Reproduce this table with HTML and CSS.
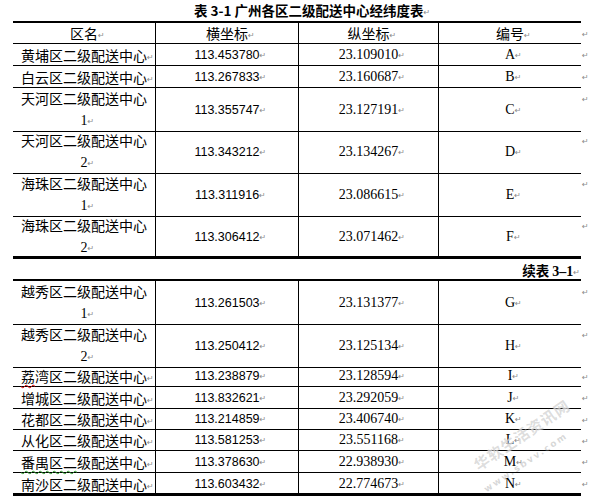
FILE: index.html
```html
<!DOCTYPE html>
<html lang="zh">
<head>
<meta charset="utf-8">
<title>表 3-1</title>
<link rel="stylesheet" href="styles.css">
</head>
<body>
<div class="page">
  <div class="title">表 3-1 广州各区二级配送中心经纬度表<i class="pm pm-t">↵</i></div>
  <div class="rule top"></div>

  <div class="row h21">
    <div class="c c1"><span>区名<i class="pm">↵</i></span></div>
    <div class="c c2"><span>横坐标<i class="pm">↵</i></span></div>
    <div class="c c3"><span>纵坐标<i class="pm">↵</i></span></div>
    <div class="c c4"><span>编号<i class="pm">↵</i></span></div>
    <div class="end"><i class="pm">↵</i></div>
  </div>
  <div class="row h22">
    <div class="c c1"><span>黄埔区二级配送中心<i class="pm">↵</i></span></div>
    <div class="c c2 num"><span>113.453780<i class="pm">↵</i></span></div>
    <div class="c c3 ser"><span>23.109010<i class="pm">↵</i></span></div>
    <div class="c c4 ser"><span>A<i class="pm">↵</i></span></div>
    <div class="end"><i class="pm">↵</i></div>
  </div>
  <div class="row h22">
    <div class="c c1"><span>白云区二级配送中心<i class="pm">↵</i></span></div>
    <div class="c c2 num"><span>113.267833<i class="pm">↵</i></span></div>
    <div class="c c3 ser"><span>23.160687<i class="pm">↵</i></span></div>
    <div class="c c4 ser"><span>B<i class="pm">↵</i></span></div>
    <div class="end"><i class="pm">↵</i></div>
  </div>
  <div class="row h42">
    <div class="c c1 two"><span>天河区二级配送中心<br><b class="sn">1</b><i class="pm">↵</i></span></div>
    <div class="c c2 num"><span>113.355747<i class="pm">↵</i></span></div>
    <div class="c c3 ser"><span>23.127191<i class="pm">↵</i></span></div>
    <div class="c c4 ser"><span>C<i class="pm">↵</i></span></div>
    <div class="end"><i class="pm">↵</i></div>
  </div>
  <div class="row h43">
    <div class="c c1 two"><span>天河区二级配送中心<br><b class="sn">2</b><i class="pm">↵</i></span></div>
    <div class="c c2 num"><span>113.343212<i class="pm">↵</i></span></div>
    <div class="c c3 ser"><span>23.134267<i class="pm">↵</i></span></div>
    <div class="c c4 ser"><span>D<i class="pm">↵</i></span></div>
    <div class="end"><i class="pm">↵</i></div>
  </div>
  <div class="row h42">
    <div class="c c1 two"><span>海珠区二级配送中心<br><b class="sn">1</b><i class="pm">↵</i></span></div>
    <div class="c c2 num"><span>113.311916<i class="pm">↵</i></span></div>
    <div class="c c3 ser"><span>23.086615<i class="pm">↵</i></span></div>
    <div class="c c4 ser"><span>E<i class="pm">↵</i></span></div>
    <div class="end"><i class="pm">↵</i></div>
  </div>
  <div class="row h41 last">
    <div class="c c1 two"><span>海珠区二级配送中心<br><b class="sn">2</b><i class="pm">↵</i></span></div>
    <div class="c c2 num"><span>113.306412<i class="pm">↵</i></span></div>
    <div class="c c3 ser"><span>23.071462<i class="pm">↵</i></span></div>
    <div class="c c4 ser"><span>F<i class="pm">↵</i></span></div>
    <div class="end"><i class="pm">↵</i></div>
  </div>
  <div class="rule bottom"></div>

  <div class="cont">续表 <b class="sb">3–1</b><i class="pm pm-t">↵</i></div>
  <div class="rule top"></div>

  <div class="row h43">
    <div class="c c1 two"><span>越秀区二级配送中心<br><b class="sn">1</b><i class="pm">↵</i></span></div>
    <div class="c c2 num"><span>113.261503<i class="pm">↵</i></span></div>
    <div class="c c3 ser"><span>23.131377<i class="pm">↵</i></span></div>
    <div class="c c4 ser"><span>G<i class="pm">↵</i></span></div>
    <div class="end"><i class="pm">↵</i></div>
  </div>
  <div class="row h42">
    <div class="c c1 two"><span>越秀区二级配送中心<br><b class="sn">2</b><i class="pm">↵</i></span></div>
    <div class="c c2 num"><span>113.250412<i class="pm">↵</i></span></div>
    <div class="c c3 ser"><span>23.125134<i class="pm">↵</i></span></div>
    <div class="c c4 ser"><span>H<i class="pm">↵</i></span></div>
    <div class="end"><i class="pm">↵</i></div>
  </div>
  <div class="row h21">
    <div class="c c1"><span><u class="sp">荔</u>湾区二级配送中心<i class="pm">↵</i></span></div>
    <div class="c c2 num"><span>113.238879<i class="pm">↵</i></span></div>
    <div class="c c3 ser"><span>23.128594<i class="pm">↵</i></span></div>
    <div class="c c4 ser"><span>I<i class="pm">↵</i></span></div>
    <div class="end"><i class="pm">↵</i></div>
  </div>
  <div class="row h22">
    <div class="c c1"><span>增城区二级配送中心<i class="pm">↵</i></span></div>
    <div class="c c2 num"><span>113.832621<i class="pm">↵</i></span></div>
    <div class="c c3 ser"><span>23.292059<i class="pm">↵</i></span></div>
    <div class="c c4 ser"><span>J<i class="pm">↵</i></span></div>
    <div class="end"><i class="pm">↵</i></div>
  </div>
  <div class="row h21">
    <div class="c c1"><span>花都区二级配送中心<i class="pm">↵</i></span></div>
    <div class="c c2 num"><span>113.214859<i class="pm">↵</i></span></div>
    <div class="c c3 ser"><span>23.406740<i class="pm">↵</i></span></div>
    <div class="c c4 ser"><span>K<i class="pm">↵</i></span></div>
    <div class="end"><i class="pm">↵</i></div>
  </div>
  <div class="row h21">
    <div class="c c1"><span>从化区二级配送中心<i class="pm">↵</i></span></div>
    <div class="c c2 num"><span>113.581253<i class="pm">↵</i></span></div>
    <div class="c c3 ser"><span>23.551168<i class="pm">↵</i></span></div>
    <div class="c c4 ser"><span>L<i class="pm">↵</i></span></div>
    <div class="end"><i class="pm">↵</i></div>
  </div>
  <div class="row h22">
    <div class="c c1"><span><u class="gr">番禺区二</u>级配送中心<i class="pm">↵</i></span></div>
    <div class="c c2 num"><span>113.378630<i class="pm">↵</i></span></div>
    <div class="c c3 ser"><span>22.938930<i class="pm">↵</i></span></div>
    <div class="c c4 ser"><span>M<i class="pm">↵</i></span></div>
    <div class="end"><i class="pm">↵</i></div>
  </div>
  <div class="row h20 last">
    <div class="c c1"><span>南沙区二级配送中心<i class="pm">↵</i></span></div>
    <div class="c c2 num"><span>113.603432<i class="pm">↵</i></span></div>
    <div class="c c3 ser"><span>22.774673<i class="pm">↵</i></span></div>
    <div class="c c4 ser"><span>N<i class="pm">↵</i></span></div>
    <div class="end"><i class="pm">↵</i></div>
  </div>
  <div class="rule bottom"></div>

  <div class="wm">
    <span class="wm-cn">华软生活资讯网</span>
    <span class="wm-url">www.sbvv.com</span>
  </div>
</div>
</body>
</html>
```

FILE: styles.css
```css
* {
  box-sizing: border-box;
  margin: 0;
  padding: 0;
}

html {
  background: #fff;
  overflow: hidden;
}

body {
  background: #fff;
  font-family: "Noto Sans CJK SC", "Noto Sans", sans-serif;
  font-size: 14px;
  color: #000;
}

.page {
  position: relative;
  width: 613px;
  height: 500px;
  overflow: hidden;
  padding-left: 13px;
}

.title {
  height: 21px;
  padding-left: 181px;
  font-weight: bold;
  font-size: 13.5px;
  line-height: 21px;
  white-space: nowrap;
}

.rule {
  width: 568px;
  background: #000;
}

.rule.top {
  height: 2px;
}

.rule.bottom {
  height: 3px;
}

.row {
  display: grid;
  grid-template-columns: 143px 143px 140px 142px 30px;
}

.h20 { height: 20px; }
.h21 { height: 21px; }
.h22 { height: 22px; }
.h41 { height: 41px; }
.h42 { height: 42px; }
.h43 { height: 43px; }

.c {
  display: flex;
  flex-direction: column;
  justify-content: center;
  align-items: center;
  text-align: center;
  white-space: nowrap;
  border-bottom: 1px solid #000;
  line-height: 20px;
}

.c1, .c2, .c3 {
  border-right: 1px solid #000;
}

.row.last .c {
  border-bottom: 0;
}

.c1.two {
  justify-content: flex-start;
  line-height: 21px;
}

.num {
  font-family: "Liberation Sans", Arial, sans-serif;
  font-size: 12.5px;
}

.ser {
  font-family: "Liberation Serif", "Times New Roman", serif;
  font-size: 14px;
}

.sn {
  font-weight: normal;
  font-family: "Liberation Serif", "Times New Roman", serif;
}

.pm {
  display: inline-block;
  width: 8px;
  margin-right: -8px;
  font-style: normal;
  font-family: "DejaVu Sans", sans-serif;
  font-size: 8px;
  color: #8a8a8a;
  text-align: left;
  vertical-align: 1px;
  line-height: 1;
}

.pm-t {
  margin-right: 0;
  width: auto;
  font-weight: normal;
}

.end {
  display: block;
  padding-left: 1px;
  line-height: 21px;
}

.end .pm {
  vertical-align: 2px;
}

.cont {
  width: 568px;
  height: 20px;
  text-align: right;
  font-weight: bold;
  font-size: 13.5px;
  line-height: 22px;
  padding-right: 1px;
  white-space: nowrap;
}

.sb {
  font-family: "Liberation Serif", "Times New Roman", serif;
  font-size: 14px;
  font-weight: bold;
}

u.sp {
  text-decoration: underline wavy #e00000;
  text-decoration-thickness: 1px;
  text-underline-offset: 2px;
  text-decoration-skip-ink: none;
}

u.gr {
  text-decoration: underline wavy #2a9a2a;
  text-decoration-thickness: 1px;
  text-underline-offset: 2px;
  text-decoration-skip-ink: none;
}

.wm {
  position: absolute;
  left: 466px;
  top: 424px;
  width: 124px;
  height: 40px;
  display: flex;
  flex-direction: column;
  align-items: center;
  justify-content: space-between;
  transform: rotate(-34deg);
  transform-origin: center center;
  pointer-events: none;
}

.wm-cn {
  font-size: 15px;
  line-height: 18px;
  font-weight: bold;
  color: rgba(140, 140, 140, 0.3);
  letter-spacing: 1px;
  white-space: nowrap;
  text-shadow: 0 0 1px rgba(255,255,255,0.8);
}

.wm-url {
  margin-right: 24px;
  font-family: "DejaVu Sans", sans-serif;
  font-size: 9px;
  line-height: 12px;
  font-weight: bold;
  color: rgba(140, 140, 140, 0.35);
  letter-spacing: 2px;
  white-space: nowrap;
}
```
